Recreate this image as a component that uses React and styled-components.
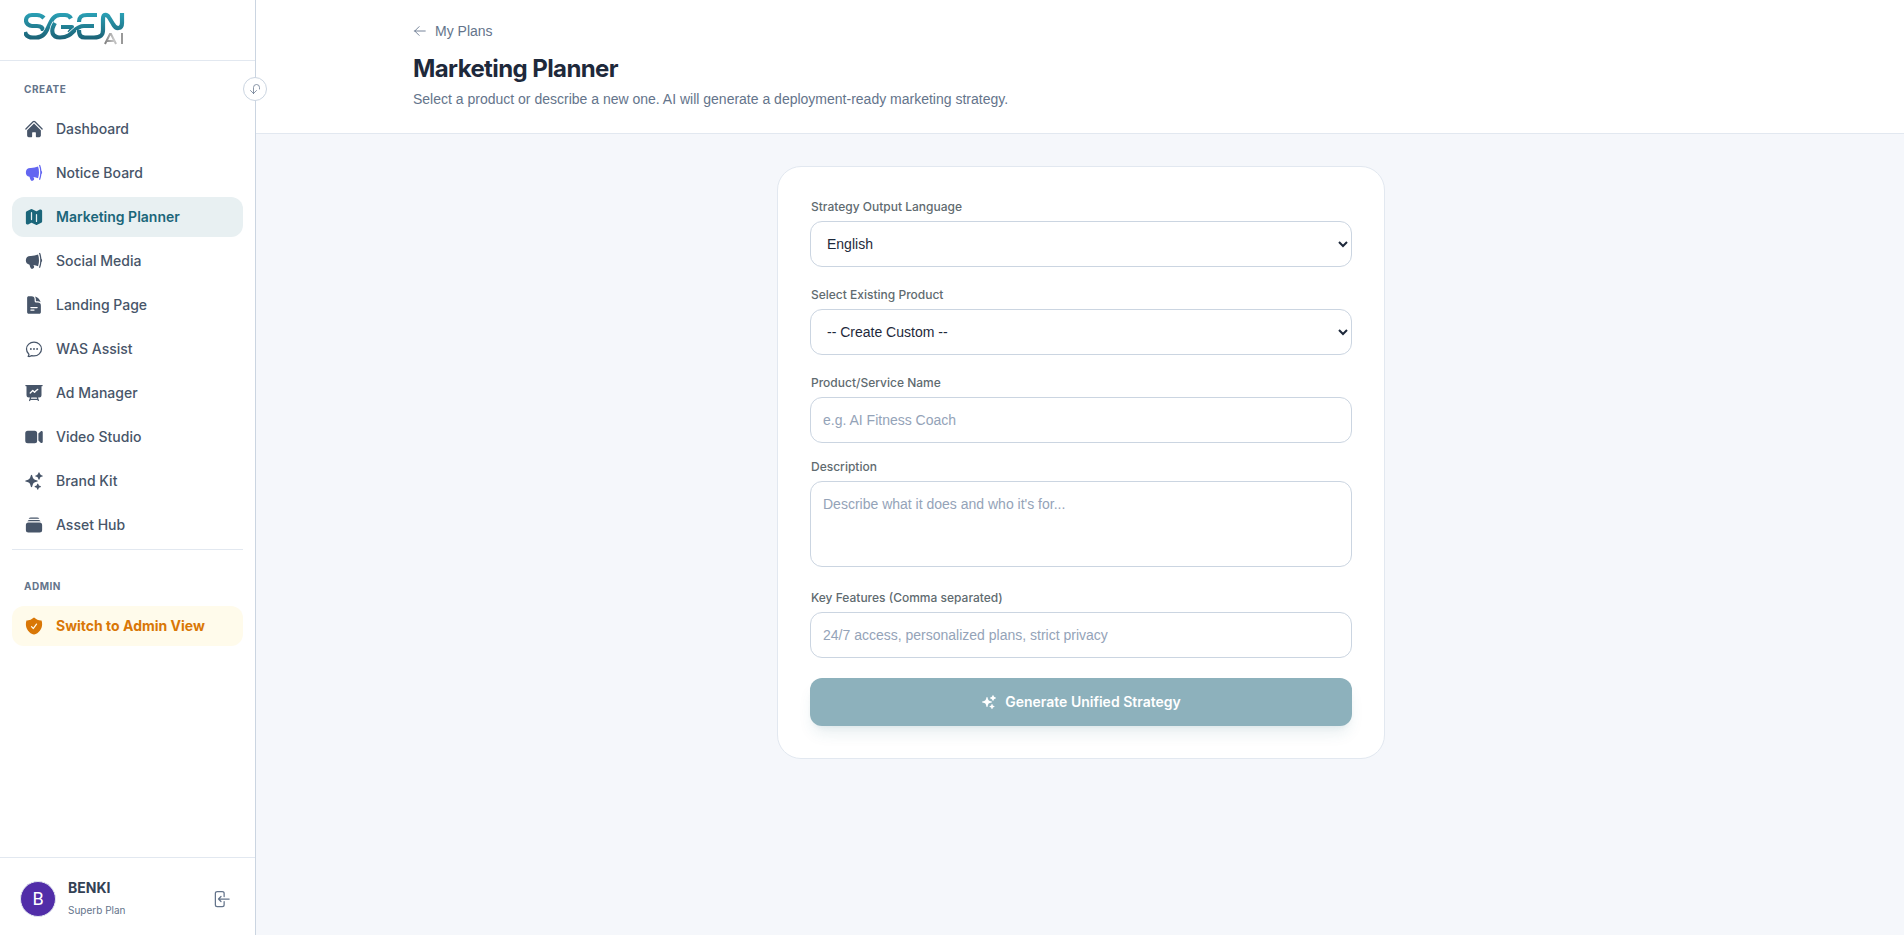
import { useState } from "react";
import styled, { createGlobalStyle, css } from "styled-components";
import {
  HiHome,
  HiMegaphone,
  HiMap,
  HiDocumentText,
  HiOutlineChatBubbleOvalLeftEllipsis,
  HiPresentationChartLine,
  HiVideoCamera,
  HiSparkles,
  HiRectangleStack,
  HiShieldCheck,
  HiOutlineArrowLeft,
  HiOutlineArrowUturnDown,
  HiOutlineArrowLeftOnRectangle,
} from "react-icons/hi2";

const textFont = `"Liberation Sans", Arial, sans-serif`;

const GlobalStyle = createGlobalStyle`
  * {
    box-sizing: border-box;
  }
  body {
    margin: 0;
    background-color: #f5f7fb;
    color: #1e293b;
    font-family: Inter, "Liberation Sans", sans-serif;
    font-size: 14px;
    line-height: 20px;
  }
  button, input, select, textarea {
    font: inherit;
  }
`;

const Layout = styled.div`
  display: flex;
  min-height: 100vh;
`;

const Sidebar = styled.aside`
  position: sticky;
  top: 0;
  display: flex;
  flex-direction: column;
  flex: none;
  width: 256px;
  height: 100vh;
  background-color: #ffffff;
  border-right: 1px solid #cbd5e1;
`;

const Brand = styled.a`
  display: flex;
  padding: 12px 24px 14px;
  border-bottom: 1px solid #e2e8f0;
  svg {
    display: block;
  }
`;

const ToggleButton = styled.button`
  position: absolute;
  top: 77px;
  right: -12px;
  display: flex;
  align-items: center;
  justify-content: center;
  width: 24px;
  height: 24px;
  padding: 0;
  color: #64748b;
  background-color: #ffffff;
  border: 1px solid #cbd5e1;
  border-radius: 50%;
  cursor: pointer;
`;

const Nav = styled.nav`
  flex: 1;
  padding: 16px 12px;
`;

const GroupTitle = styled.h2`
  margin: 0;
  padding: 4px 12px;
  color: #64748b;
  font-size: 10px;
  font-weight: 700;
  line-height: 16px;
  letter-spacing: 0.5px;
  text-transform: uppercase;
`;

const NavList = styled.ul`
  display: flex;
  flex-direction: column;
  gap: 4px;
  margin: 0;
  padding: 8px 0 4px;
  list-style: none;
`;

const AdminGroup = styled.div`
  padding-top: 24px;
  border-top: 1px solid #e2e8f0;
`;

const NavLink = styled.a`
  display: flex;
  align-items: center;
  gap: 12px;
  padding: 10px 12px;
  border-radius: 12px;
  color: #475569;
  font-weight: 500;
  text-decoration: none;
  svg {
    flex: none;
    color: ${({ $iconColor }) => $iconColor || "inherit"};
  }
  ${({ $active }) => $active && css`
    color: #1b667a;
    background-color: #e8f0f2;
    font-weight: 600;
  `}
  ${({ $admin }) => $admin && css`
    color: #d97706;
    background-color: #fffbeb;
    font-weight: 700;
  `}
`;

const UserBar = styled.div`
  display: flex;
  align-items: center;
  gap: 12px;
  padding: 20px 24px 15px 20px;
  border-top: 1px solid #e2e8f0;
`;

const Avatar = styled.div`
  display: flex;
  align-items: center;
  justify-content: center;
  width: 36px;
  height: 36px;
  color: #ffffff;
  background-color: #512da8;
  border: 1px solid #e2e8f0;
  border-radius: 50%;
  font-family: Roboto, sans-serif;
  font-size: 18px;
`;

const UserInfo = styled.div`
  display: flex;
  flex: 1;
  flex-direction: column;
  gap: 2px;
  p {
    margin: 0;
    color: #334155;
    font-weight: 700;
  }
  span {
    color: #64748b;
    font-size: 10px;
  }
`;

const LogoutButton = styled.button`
  display: flex;
  padding: 0;
  color: #64748b;
  background: none;
  border: 0;
  cursor: pointer;
`;

const Main = styled.main`
  flex: 1;
  min-width: 0;
`;

const PageHeader = styled.header`
  background-color: #ffffff;
  border-bottom: 1px solid #e2e8f0;
`;

const HeaderContent = styled.div`
  max-width: 1400px;
  margin: 0 auto;
  padding: 21px 33px 24px;
  h1 {
    margin: 10px 0 4px;
    font-size: 24px;
    font-weight: 700;
    line-height: 32px;
    letter-spacing: -0.6px;
  }
  p {
    margin: 0;
    color: #64748b;
    font-family: ${textFont};
  }
`;

const BackLink = styled.a`
  display: inline-flex;
  align-items: center;
  gap: 8px;
  color: #64748b;
  font-family: ${textFont};
  text-decoration: none;
`;

const Content = styled.section`
  padding: 32px 0 32px 2px;
`;

const Card = styled.form`
  display: flex;
  flex-direction: column;
  gap: 20px;
  max-width: 608px;
  margin: 0 auto;
  padding: 32px;
  background-color: #ffffff;
  border: 1px solid #e2e8f0;
  border-radius: 24px;
`;

const FieldGroup = styled.div`
  display: flex;
  flex-direction: column;
  gap: 16px;
`;

const Field = styled.div`
  display: flex;
  flex-direction: column;
  gap: 6px;
  label {
    padding-left: 1px;
    color: #5f6b70;
    font-size: 12px;
    font-weight: 500;
    line-height: 16px;
  }
`;

const controlStyle = css`
  width: 100%;
  padding: 12px;
  color: #1e293b;
  background-color: #ffffff;
  border: 1px solid #cbd5e1;
  border-radius: 12px;
  font-family: ${textFont};
  &::placeholder {
    color: #94a3b8;
    opacity: 1;
  }
`;

const Select = styled.select`
  ${controlStyle}
  height: 46px;
`;

const Input = styled.input`
  ${controlStyle}
  height: 46px;
`;

const TextArea = styled.textarea`
  ${controlStyle}
  display: block;
  height: 86px;
  margin-bottom: 3px;
  resize: none;
`;

const SubmitButton = styled.button`
  display: flex;
  align-items: center;
  justify-content: center;
  gap: 8px;
  height: 48px;
  color: #ffffff;
  background-color: #8db1bc;
  border: 0;
  border-radius: 12px;
  box-shadow: 0 10px 15px -3px rgba(27, 102, 122, 0.1), 0 4px 6px -4px rgba(27, 102, 122, 0.1);
  font-weight: 600;
`;

const navItems = [
  { label: "Dashboard", icon: HiHome },
  { label: "Notice Board", icon: HiMegaphone, iconColor: "#6366f1" },
  { label: "Marketing Planner", icon: HiMap, active: true },
  { label: "Social Media", icon: HiMegaphone },
  { label: "Landing Page", icon: HiDocumentText },
  { label: "WAS Assist", icon: HiOutlineChatBubbleOvalLeftEllipsis },
  { label: "Ad Manager", icon: HiPresentationChartLine },
  { label: "Video Studio", icon: HiVideoCamera },
  { label: "Brand Kit", icon: HiSparkles },
  { label: "Asset Hub", icon: HiRectangleStack },
];

const ribbons = [
  "M20 6C18 4 16 3 13 3H8C4 3 2 5.500 2 8.500S5 14 8 14H13C17 14 19 16 19 19",
  "M37 15H48C48 18 47 19 45 21",
  "M73 3H63C57 3 55 5 55 10",
  "M1 20C2 24 5 25.500 9 25.500H12C27 25.500 23 3 36 3H41C44 3 46 4.500 47 6.500",
  "M31 11C26 19 28 25.500 36 25.500C50 25.500 49 14 60 14H70",
  "M55 18C55 24 57 25.500 61 25.500H70C77 25.500 79 23 79 18V7C79 1.500 83 2 85 5.500L89 12C92 18 98 17 98 11V1",
];

const Logo = () => (
  <svg width="102" height="34" viewBox="0 0 102 34" role="img" aria-label="SGEN AI">
    <defs>
      <linearGradient id="teal" x1="0" y1="0" x2="0" y2="28" gradientUnits="userSpaceOnUse">
        <stop offset="0" stopColor="#2ba3b8" />
        <stop offset="1" stopColor="#1b6074" />
      </linearGradient>
      <linearGradient id="silver" x1="80" y1="0" x2="100" y2="0" gradientUnits="userSpaceOnUse">
        <stop offset="0" stopColor="#777777" />
        <stop offset="0.5" stopColor="#c8c8c8" />
        <stop offset="1" stopColor="#8c8c8c" />
      </linearGradient>
    </defs>
    {/* each ribbon has a white edge so that it passes over the one before */}
    {ribbons.map((d) => (
      <g key={d} fill="none" strokeLinejoin="round">
        <path d={d} stroke="#ffffff" strokeWidth="5.600" />
        <path d={d} stroke="url(#teal)" strokeWidth="4.200" />
      </g>
    ))}
    <g fill="none" stroke="url(#silver)" strokeWidth="2">
      <path d="M81 32L86 22H87L92 32M83 29H91" />
      <path d="M98 21V32" stroke="#999999" />
    </g>
  </svg>
);

const App = () => {

  const [language, setLanguage] = useState("English");

  return (
    <>
      <GlobalStyle />
      <Layout>
        <Sidebar>
          <Brand href="#">
            <Logo />
          </Brand>
          <ToggleButton type="button" aria-label="Collapse sidebar">
            <HiOutlineArrowUturnDown size={12} />
          </ToggleButton>
          <Nav>
            <GroupTitle>Create</GroupTitle>
            <NavList>
              {navItems.map(({ label, icon: Icon, iconColor, active }) => (
                <li key={label}>
                  <NavLink href="#" $iconColor={iconColor} $active={active}>
                    <Icon size={20} />
                    {label}
                  </NavLink>
                </li>
              ))}
            </NavList>
            <AdminGroup>
              <GroupTitle>Admin</GroupTitle>
              <NavList>
                <li>
                  <NavLink href="#" $admin>
                    <HiShieldCheck size={20} />
                    Switch to Admin View
                  </NavLink>
                </li>
              </NavList>
            </AdminGroup>
          </Nav>
          <UserBar>
            <Avatar>B</Avatar>
            <UserInfo>
              <p>BENKI</p>
              <span>Superb Plan</span>
            </UserInfo>
            <LogoutButton type="button" aria-label="Log out">
              <HiOutlineArrowLeftOnRectangle size={20} />
            </LogoutButton>
          </UserBar>
        </Sidebar>
        <Main>
          <PageHeader>
            <HeaderContent>
              <BackLink href="#">
                <HiOutlineArrowLeft size={14} />
                My Plans
              </BackLink>
              <h1>Marketing Planner</h1>
              <p>Select a product or describe a new one. AI will generate a deployment-ready marketing strategy.</p>
            </HeaderContent>
          </PageHeader>
          <Content>
            <Card onSubmit={(e) => e.preventDefault()}>
              <Field>
                <label htmlFor="language">Strategy Output Language</label>
                <Select id="language" value={language} onChange={(e) => setLanguage(e.target.value)}>
                  <option>English</option>
                </Select>
              </Field>
              <Field>
                <label htmlFor="product">Select Existing Product</label>
                <Select id="product">
                  <option>-- Create Custom --</option>
                </Select>
              </Field>
              <FieldGroup>
                <Field>
                  <label htmlFor="name">Product/Service Name</label>
                  <Input id="name" type="text" placeholder="e.g. AI Fitness Coach" />
                </Field>
                <Field>
                  <label htmlFor="description">Description</label>
                  <TextArea id="description" placeholder="Describe what it does and who it's for..." />
                </Field>
              </FieldGroup>
              <Field>
                <label htmlFor="features">Key Features (Comma separated)</label>
                <Input id="features" type="text" placeholder="24/7 access, personalized plans, strict privacy" />
              </Field>
              <SubmitButton type="submit">
                <HiSparkles size={16} />
                Generate Unified Strategy
              </SubmitButton>
            </Card>
          </Content>
        </Main>
      </Layout>
    </>
  );
}

export default App;
